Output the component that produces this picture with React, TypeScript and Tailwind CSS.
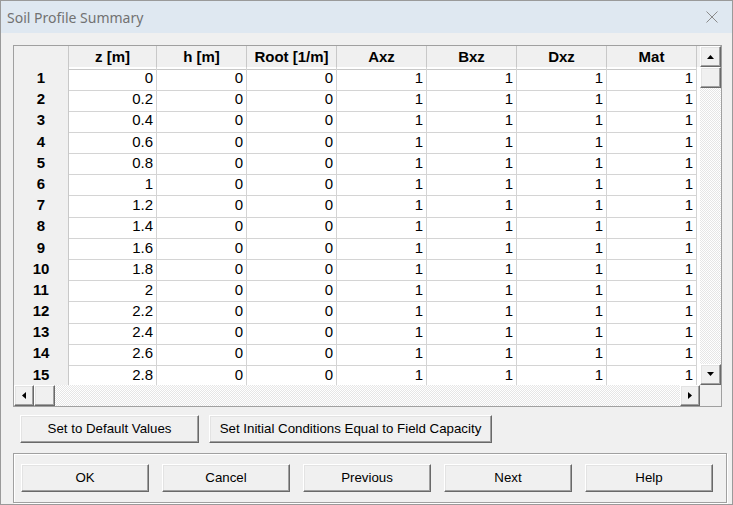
import React from 'react'

const columns = ['z [m]', 'h [m]', 'Root [1/m]', 'Axz', 'Bxz', 'Dxz', 'Mat']
const depths = ['0', '0.2', '0.4', '0.6', '0.8', '1', '1.2', '1.4', '1.6', '1.8', '2', '2.2', '2.4', '2.6', '2.8']

const cols = 'grid grid-cols-[55px_88px_90px_90px_90px_90px_90px_90px]'
const raised =
	'border border-t-white border-l-white border-r-[#696969] border-b-[#696969] shadow-[inset_-1px_-1px_0_#a0a0a0,inset_1px_1px_0_#e3e3e3] bg-[#f0f0f0]'
const track =
	'bg-[image:repeating-conic-gradient(#ffffff_0%_25%,#e6e6e6_0%_50%)] bg-[length:2px_2px]'

const Arrow = ({ dir }: { dir: 'up' | 'down' | 'left' | 'right' }) => {
	const points = {
		up: '0,4 7,4 3.5,0',
		down: '0,0 7,0 3.5,4',
		left: '4,0 4,7 0,3.5',
		right: '0,0 0,7 4,3.5',
	}[dir]
	const vertical = dir === 'up' || dir === 'down'
	return (
		<svg width={vertical ? 7 : 4} height={vertical ? 4 : 7} className="block">
			<polygon points={points} fill="#000" />
		</svg>
	)
}

const ScrollButton = ({ dir, className = '' }: { dir: 'up' | 'down' | 'left' | 'right'; className?: string }) => (
	<div className={`${raised} flex items-center justify-center ${className}`}>
		<Arrow dir={dir} />
	</div>
)

const Button = ({ label, className = '' }: { label: string; className?: string }) => (
	<button
		className={`${raised} h-[28px] text-[13.3px] text-black font-['Liberation_Sans',Arial,sans-serif] ${className}`}
	>
		{label}
	</button>
)

export default function App() {
	return (
		<div className="w-[733px] h-[505px] border border-[#9a9a9a] bg-[#f0f0f0] flex flex-col font-['Liberation_Sans',Arial,sans-serif] overflow-hidden">
			<div className="h-[32px] shrink-0 bg-[#dfe8f1] flex items-center justify-between pl-[6px] pr-[14px]">
				<span className="text-[14px] text-[#727272] font-['Noto_Sans',sans-serif]">Soil Profile Summary</span>
				<svg width="12" height="12" viewBox="0 0 12 12">
					<path d="M0.5 0.5 L11.5 11.5 M11.5 0.5 L0.5 11.5" stroke="#8a8a8a" strokeWidth="1" />
				</svg>
			</div>

			<div className="flex-1 flex flex-col pl-[12px] pt-[12px]">
				<div className="w-[709px] border border-[#a0a0a0] bg-white flex flex-col">
					<div className="flex">
						<div className="w-[686px]">
							<div className={`${cols} h-[21px] bg-[#f0f0f0] text-[15px] font-bold text-black`}>
								<div className="border-r border-b border-[#c8c8c8]" />
								{columns.map(c => (
									<div key={c} className="border-r border-b border-[#c8c8c8] flex items-center justify-center">
										{c}
									</div>
								))}
							</div>
							{depths.map((z, i) => (
								<div key={z} className={`${cols} h-[21.2px] text-[15px] text-black`}>
									<div className="bg-[#f0f0f0] border-r border-b border-[#c8c8c8] flex items-center justify-center font-bold">
										{i + 1}
									</div>
									{[z, '0', '0', '1', '1', '1', '1'].map((v, j) => (
										<div key={j} className="border-r border-b border-[#d4d4d4] flex items-center justify-end pr-[3px]">
											{v}
										</div>
									))}
								</div>
							))}
						</div>
						<div className="w-[21px] flex flex-col">
							<ScrollButton dir="up" className="h-[21px]" />
							<div className={`${raised} h-[21px]`} />
							<div className={`flex-1 ${track}`} />
							<ScrollButton dir="down" className="h-[21px]" />
						</div>
					</div>
					<div className="flex h-[21px]">
						<div className={`w-[686px] flex ${track}`}>
							<ScrollButton dir="left" className="w-[20px]" />
							<div className={`${raised} w-[21px]`} />
							<div className="flex-1" />
							<ScrollButton dir="right" className="w-[20px]" />
						</div>
						<div className="w-[21px] bg-[#f0f0f0]" />
					</div>
				</div>

				<div className="flex gap-[10px] pl-[7px] mt-[8px]">
					<Button label="Set to Default Values" className="w-[179px]" />
					<Button label="Set Initial Conditions Equal to Field Capacity" className="w-[283px]" />
				</div>

				<div className="mt-[10px] w-[714px] h-[50px] border border-[#a0a0a0] shadow-[1px_1px_0_#ffffff,inset_1px_1px_0_#ffffff] flex items-center gap-[13px] pl-[7px]">
					{['OK', 'Cancel', 'Previous', 'Next', 'Help'].map(l => (
						<Button key={l} label={l} className="w-[128px]" />
					))}
				</div>
			</div>
		</div>
	)
}
